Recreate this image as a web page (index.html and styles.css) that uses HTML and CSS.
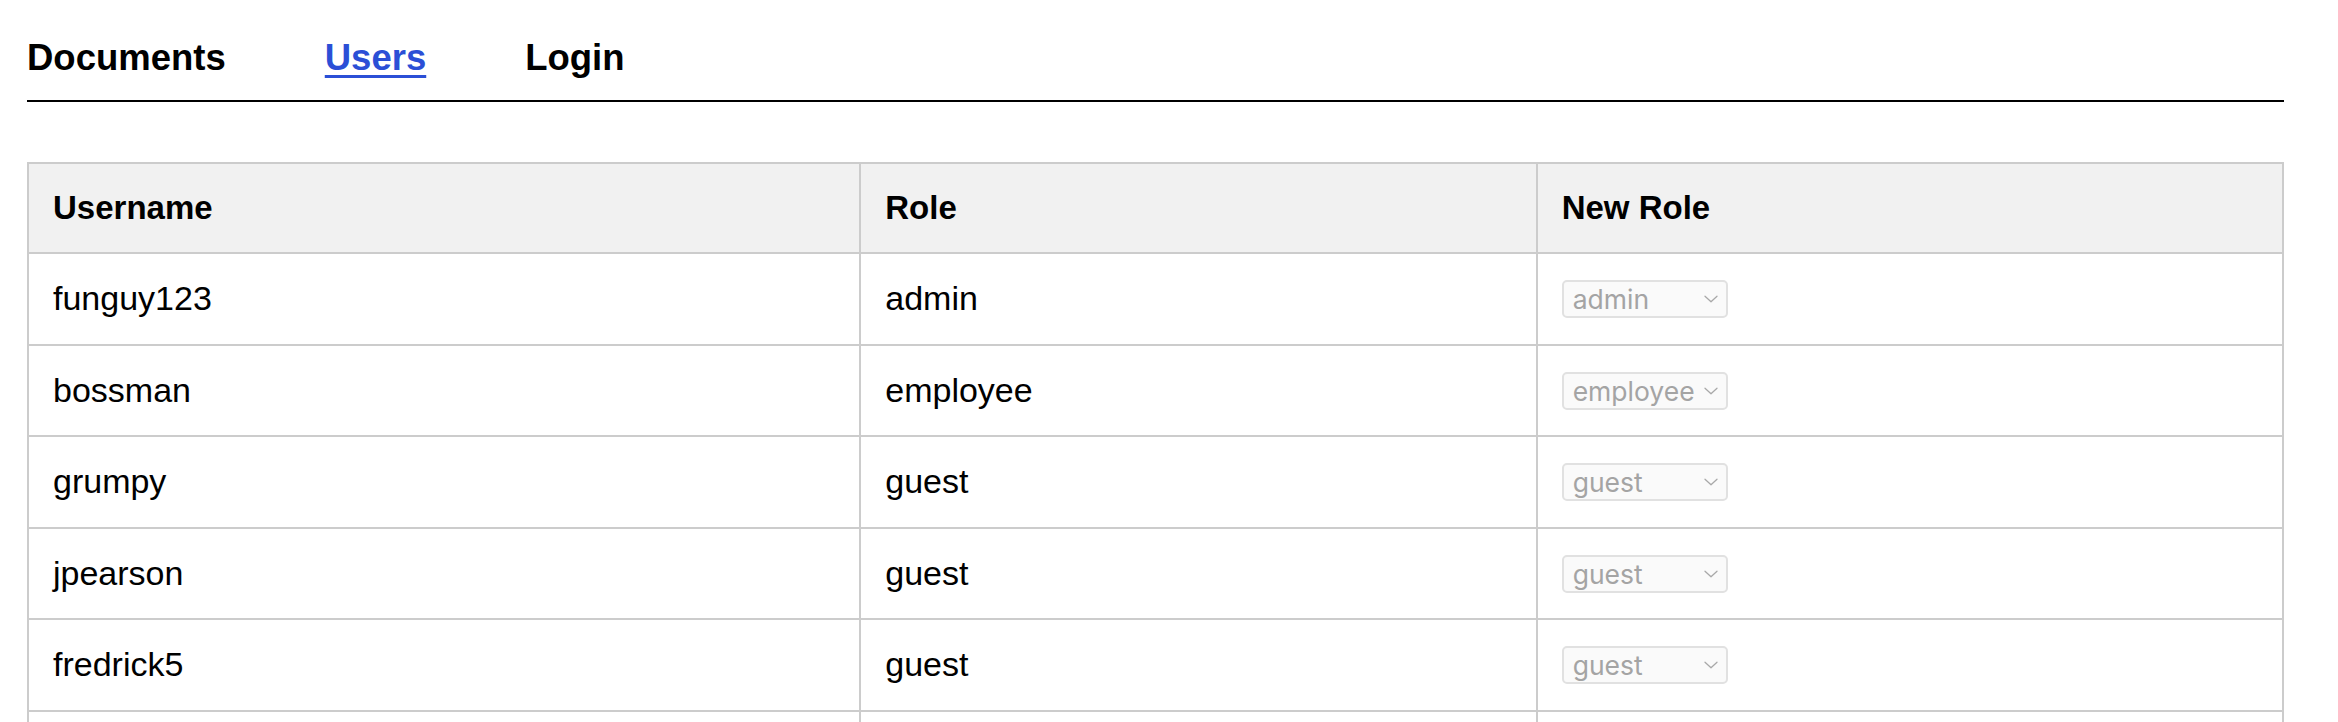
FILE: index.html
```html
<!DOCTYPE html>
<html lang="en">
<head>
<meta charset="utf-8">
<title>Users</title>
<link rel="stylesheet" href="styles.css">
</head>
<body>
<div class="page">
  <nav class="nav">
    <a class="nav-link" href="#">Documents</a>
    <a class="nav-link active" href="#">Users</a>
    <a class="nav-link" href="#">Login</a>
  </nav>
  <table class="users">
    <colgroup>
      <col class="col-user">
      <col class="col-role">
      <col class="col-new">
    </colgroup>
    <thead>
      <tr><th>Username</th><th>Role</th><th>New Role</th></tr>
    </thead>
    <tbody>
      <tr><td>funguy123</td><td>admin</td><td><span class="sel"><select disabled><option>admin</option></select><svg class="chev" viewBox="0 0 18 10"><path d="M1.5 1.5 L9 8.5 L16.5 1.5" fill="none" stroke="#a8a8a8" stroke-width="1.6" stroke-linecap="round" stroke-linejoin="round"/></svg></span></td></tr>
      <tr><td>bossman</td><td>employee</td><td><span class="sel"><select disabled><option>employee</option></select><svg class="chev" viewBox="0 0 18 10"><path d="M1.5 1.5 L9 8.5 L16.5 1.5" fill="none" stroke="#a8a8a8" stroke-width="1.6" stroke-linecap="round" stroke-linejoin="round"/></svg></span></td></tr>
      <tr><td>grumpy</td><td>guest</td><td><span class="sel"><select disabled><option>guest</option></select><svg class="chev" viewBox="0 0 18 10"><path d="M1.5 1.5 L9 8.5 L16.5 1.5" fill="none" stroke="#a8a8a8" stroke-width="1.6" stroke-linecap="round" stroke-linejoin="round"/></svg></span></td></tr>
      <tr><td>jpearson</td><td>guest</td><td><span class="sel"><select disabled><option>guest</option></select><svg class="chev" viewBox="0 0 18 10"><path d="M1.5 1.5 L9 8.5 L16.5 1.5" fill="none" stroke="#a8a8a8" stroke-width="1.6" stroke-linecap="round" stroke-linejoin="round"/></svg></span></td></tr>
      <tr><td>fredrick5</td><td>guest</td><td><span class="sel"><select disabled><option>guest</option></select><svg class="chev" viewBox="0 0 18 10"><path d="M1.5 1.5 L9 8.5 L16.5 1.5" fill="none" stroke="#a8a8a8" stroke-width="1.6" stroke-linecap="round" stroke-linejoin="round"/></svg></span></td></tr>
      <tr><td>newbie</td><td>guest</td><td><span class="sel"><select disabled><option>guest</option></select><svg class="chev" viewBox="0 0 18 10"><path d="M1.5 1.5 L9 8.5 L16.5 1.5" fill="none" stroke="#a8a8a8" stroke-width="1.6" stroke-linecap="round" stroke-linejoin="round"/></svg></span></td></tr>
    </tbody>
  </table>
</div>
</body>
</html>
```
FILE: styles.css
```css
html, body {
  margin: 0;
  padding: 0;
  background: #ffffff;
}
body {
  font-family: "Liberation Sans", Arial, sans-serif;
  color: #000;
}
.page {
  padding: 36px 54px 0 27px;
}
.nav {
  display: flex;
  gap: 99px;
  padding-bottom: 20px;
  border-bottom: 2px solid #000;
  line-height: 44px;
}
.nav-link {
  font-size: 36.5px;
  font-weight: 700;
  color: #000;
  text-decoration: none;
}
.nav-link.active {
  color: #2b4fd6;
  text-decoration: underline;
  text-decoration-thickness: 3px;
  text-underline-offset: 5px;
}
.users {
  margin-top: 60px;
  width: 100%;
  border-collapse: collapse;
  font-size: 34px;
}
.col-user { width: 833px; }
.col-role { width: 677px; }
.col-new { width: 747px; }
.users th,
.users td {
  border: 2px solid #cccccc;
  padding: 25px 24px;
  line-height: 39.5px;
  text-align: left;
  vertical-align: middle;
}
.users th {
  background: #f1f1f1;
  font-weight: 700;
  font-size: 33px;
  line-height: 39px;
  padding-top: 24px;
  padding-bottom: 25px;
}
.sel {
  position: relative;
  display: inline-block;
  vertical-align: top;
  height: 38px;
  margin-top: 1px;
}
.sel select {
  appearance: none;
  -webkit-appearance: none;
  display: block;
  width: 166px;
  height: 38px;
  box-sizing: border-box;
  padding: 0 28px 0 9px;
  font-family: Inter, "Noto Sans", sans-serif;
  font-size: 26.5px;
  line-height: 34px;
  color: #a4a4a4;
  background: #fafafa;
  border: 2px solid #e1e1e1;
  border-radius: 5px;
  opacity: 1;
}
.chev {
  position: absolute;
  right: 9px;
  top: 15px;
  width: 16px;
  height: 8px;
  pointer-events: none;
}
```
